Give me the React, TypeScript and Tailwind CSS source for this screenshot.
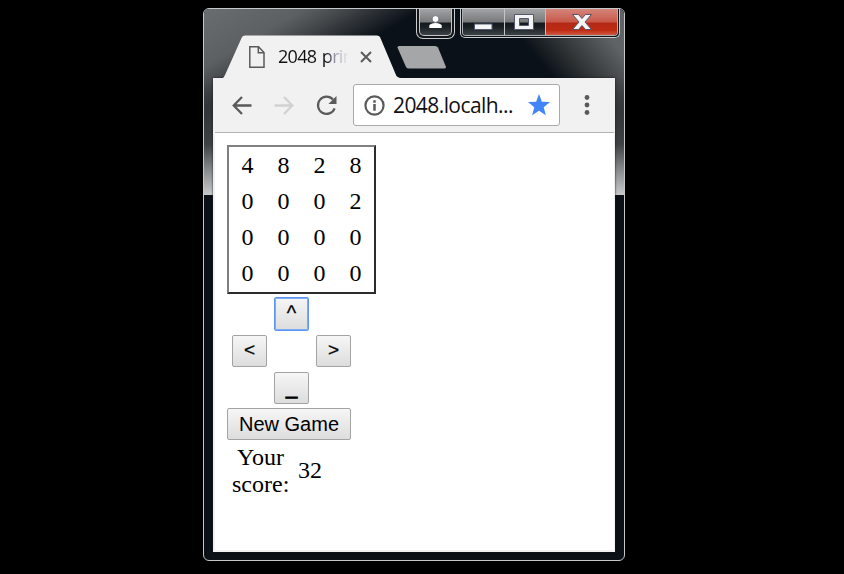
import React from "react";

const board = [
  [4, 8, 2, 8],
  [0, 0, 0, 2],
  [0, 0, 0, 0],
  [0, 0, 0, 0],
];

const glossy =
  "border-t-0 bg-[linear-gradient(180deg,#a2a3a5_0px,#77797b_13px,#14191e_14px,#1b2025_18px,#41464a_27px)]";

function WindowControls() {
  return (
    <div className="flex h-[26px] items-start justify-end pr-[4px]">
      <div className="mr-[5px] h-[30px] w-[39px] shrink-0 rounded-b-[7px] border border-t-0 border-[#c9cbcc] bg-[#111519] px-[2px] pb-[2px]">
        <div className={`flex h-[27px] justify-center rounded-b-[5px] border border-[#c3c5c7] ${glossy}`}>
          <svg width="16" height="24" viewBox="0 0 16 24">
            <circle cx="7.500" cy="10" r="3.4" fill="#fff" stroke="#555a60" strokeWidth="0.7" />
            <path d="M1.300 19v-2.500q1-2.600 6.200-2.600t6.200 2.600V19z" fill="#fff" />
          </svg>
        </div>
      </div>
      <div className="h-[29px] w-[160px] shrink-0 rounded-b-[5px] border border-t-0 border-[#c9cbcc] bg-[#111519] px-px pb-px">
        <div className="flex h-[27px] overflow-hidden rounded-b-[4px] border border-t-0 border-[#aaadb0]">
          <div className={`w-[41px] shrink-0 ${glossy}`}>
            <svg width="41" height="27" viewBox="0 0 41 27">
              <rect x="11.500" y="15" width="17.500" height="5.500" fill="#f6f6f6" stroke="#555970" />
            </svg>
          </div>
          <div className={`w-[41px] shrink-0 border-l border-[#c3c5c7] ${glossy}`}>
            <svg width="40" height="27" viewBox="0 0 40 27">
              <path fillRule="evenodd" d="M9.500 5.500h19v15h-19zM14.500 9.500h9v7h-9z" fill="#f3f3f3" stroke="#55586a" />
            </svg>
          </div>
          <div className="grow border-l border-[#e0b1a8] bg-[linear-gradient(180deg,#d4857a_0px,#c8584a_13px,#b32916_14px,#bd2a12_21px,#cf5942_26px)]">
            <svg width="73" height="27" viewBox="0 0 73 27">
              <path d="M26.500 5.500h6l3.500 4 3.500-4h6l-6.500 7.500 6.500 7.500h-6l-3.500-4-3.500 4h-6l6.500-7.500z" fill="#f5f5f5" stroke="#56546a" strokeWidth="1" />
            </svg>
          </div>
        </div>
      </div>
    </div>
  );
}

function TabStrip() {
  return (
    <div className="flex h-[43px] pl-[19px]">
      <div className="relative h-[43px] w-[178px] shrink-0">
        <svg className="absolute inset-0" width="178" height="43" viewBox="0 0 178 43">
          <path d="M0 43Q1 42 2 40L19 2Q20 .5 22 .5H154Q156 .5 157 2L173 40Q174 42.500 178 43z" fill="#f1f1f1" />
        </svg>
        <div className="relative flex h-[43px] items-center pl-[26px]">
          <svg className="shrink-0" width="16" height="22" viewBox="0 0 16 22" fill="none" stroke="#5a5a5a" strokeWidth="1.500">
            <path d="M.8 .8H9.500L15 6.500V21.200H.8zM9.300 1v5.700H15" />
          </svg>
          <div className="ml-[13px] w-[71px] whitespace-nowrap bg-[linear-gradient(90deg,#111_48px,#9a9aac_57px,#f1f1f1_71px)] bg-clip-text pb-[2px] font-['Open_Sans',sans-serif] text-[18px] leading-[24px] tracking-[-0.7px] text-transparent [word-spacing:1.5px]">
            2048 prin
          </div>
          <svg className="ml-[11px] shrink-0" width="12" height="12" viewBox="0 0 12 12" stroke="#5a5a5a" strokeWidth="2">
            <path d="M1 1l10 10M11 1L1 11" />
          </svg>
        </div>
      </div>
      <svg className="-ml-[4px] mt-[11px]" width="50" height="23" viewBox="0 0 50 23">
        <path d="M2 0H38Q40 0 41 1.500L49 21Q49 22.500 47 22.500H12Q10 22.500 9 21L.5 1.500Q.5 0 2 0z" fill="#a5a6a8" />
      </svg>
    </div>
  );
}

function Toolbar() {
  return (
    <div className="flex h-[54px] items-center bg-[#f1f1f1] pl-[19px]">
      <svg width="20" height="19" viewBox="0 0 21 20" fill="none" stroke="#5a5a5a" strokeWidth="2.400">
        <path d="M20.500 10H2M10.500 1L1.800 10l8.700 9" />
      </svg>
      <svg className="ml-[22px]" width="20" height="19" viewBox="0 0 21 20" fill="none" stroke="#d1d1d1" strokeWidth="2.400">
        <path d="M.5 10H19M10.500 1l8.700 9-8.700 9" />
      </svg>
      <svg className="ml-[22px]" width="21" height="21" viewBox="0 0 22 22">
        <path d="M17.800 4.800A9 9 0 1 0 19.500 14" fill="none" stroke="#5a5a5a" strokeWidth="2.300" />
        <path d="M21.500 1v8.500H13z" fill="#5a5a5a" />
      </svg>
      <div className="ml-[16px] flex h-[42px] w-[207px] items-center rounded-[3px] border border-[#a9a9a9] bg-white pl-[10px]">
        <svg className="shrink-0" width="21" height="21" viewBox="0 0 22 22">
          <circle cx="11" cy="11" r="9.500" fill="none" stroke="#5a5a5a" strokeWidth="2.300" />
          <path d="M9.700 9.500h2.600V16.500H9.700zM9.700 5.600h2.600v2.400H9.700z" fill="#5a5a5a" />
        </svg>
        <span className="ml-[8px] w-[122px] shrink-0 whitespace-nowrap pb-px font-['Open_Sans',sans-serif] text-[21px] leading-[28px] tracking-[-0.58px] text-[#111]">
          2048.localh...
        </span>
        <svg className="ml-[13px] shrink-0" width="22" height="22" viewBox="0 0 22 22">
          <path d="M11 0l2.900 7.700 8.100.4-6.300 5.100 2.200 8L11 16.800l-6.900 4.400 2.200-8L0 8.100l8.100-.4z" fill="#4285f4" />
        </svg>
      </div>
      <svg className="ml-[24px]" width="6" height="22" viewBox="0 0 6 22" fill="#5a5a5a">
        <circle cx="3" cy="3.500" r="2.400" />
        <circle cx="3" cy="11" r="2.400" />
        <circle cx="3" cy="18.500" r="2.400" />
      </svg>
    </div>
  );
}

function PadButton({ label, className }: { label: string; className: string }) {
  return (
    <button
      className={`w-[35px] rounded-[2px] border bg-linear-to-b from-[#f6f6f6] to-[#dddddd] text-center font-['Liberation_Sans',Arial,sans-serif] text-black ${className}`}
    >
      {label}
    </button>
  );
}

const sideKey = "h-[32px] border-[#a3a3a3] pb-[2px] text-[19px] leading-[28px] [-webkit-text-stroke:0.3px_black]";

function Game() {
  return (
    <div className="px-[12px] pt-[12px] font-['Liberation_Serif','Times_New_Roman',serif] text-[24px] leading-[27px] text-black">
      <div className="grid h-[149px] w-[149px] grid-cols-[repeat(4,36px)] grid-rows-[repeat(4,36px)] border-2 border-t-[#808080] border-l-[#808080] border-r-[#2c2c2c] border-b-[#2c2c2c]">
        {board.flat().map((value, i) => (
          <span key={i} className="flex items-center justify-center pl-px">
            {value}
          </span>
        ))}
      </div>
      <div className="ml-[5px] flex w-[119px] flex-col pt-[3px]">
        <div className="flex h-[38px] justify-center">
          <PadButton
            label="^"
            className="h-[34px] border-[#5b97f0] pb-[2px] text-[20px] leading-[30px] shadow-[inset_0_0_0_1px_#7dabf5] [-webkit-text-stroke:0.3px_black]"
          />
        </div>
        <div className="flex h-[37px] justify-between">
          <PadButton label="<" className={sideKey} />
          <PadButton label=">" className={sideKey} />
        </div>
        <div className="flex h-[36px] justify-center">
          <PadButton
            label="_"
            className="h-[32px] border-[#a3a3a3] pb-[2px] text-[20px] leading-[28px] [-webkit-text-stroke:1px_black]"
          />
        </div>
      </div>
      <button className="block h-[32px] w-[124px] rounded-[2px] border border-[#a3a3a3] bg-linear-to-b from-[#f6f6f6] to-[#dddddd] font-['Liberation_Sans',Arial,sans-serif] text-[20px] leading-[30px]">
        New Game
      </button>
      <div className="ml-[5px] mt-[4px] flex items-center">
        <span className="w-[57px] text-center">Your score:</span>
        <span className="ml-[9px] pb-[2px]">32</span>
      </div>
    </div>
  );
}

export default function App() {
  return (
    <div className="h-[574px] w-[844px] overflow-hidden bg-black pl-[203px] pt-[8px]">
      <div className="h-[553px] w-[422px] overflow-hidden rounded-[6px] border border-[#c4c8ca] bg-[#0a1016]">
        <div className="h-[186px] bg-[linear-gradient(180deg,transparent_69px,#35383b_110px,#3e4144_135px,#85888a_160px,#c8c9ca_186px),linear-gradient(50deg,transparent_343px,#34383a_375px,#5f6365_412px),linear-gradient(150deg,#696d6f_0px,#5c6062_50px,#484b4e_68px,#0b1118_110px)]">
          <WindowControls />
          <TabStrip />
          <div className="ml-[9px] h-[474px] w-[402px] bg-[#f1f1f1] shadow-[0_0_2px_#15191d]">
            <Toolbar />
            <div className="ml-[2px] h-[418px] w-[399px] border-t border-[#b3b3b3] bg-white">
              <Game />
            </div>
          </div>
        </div>
      </div>
    </div>
  );
}
